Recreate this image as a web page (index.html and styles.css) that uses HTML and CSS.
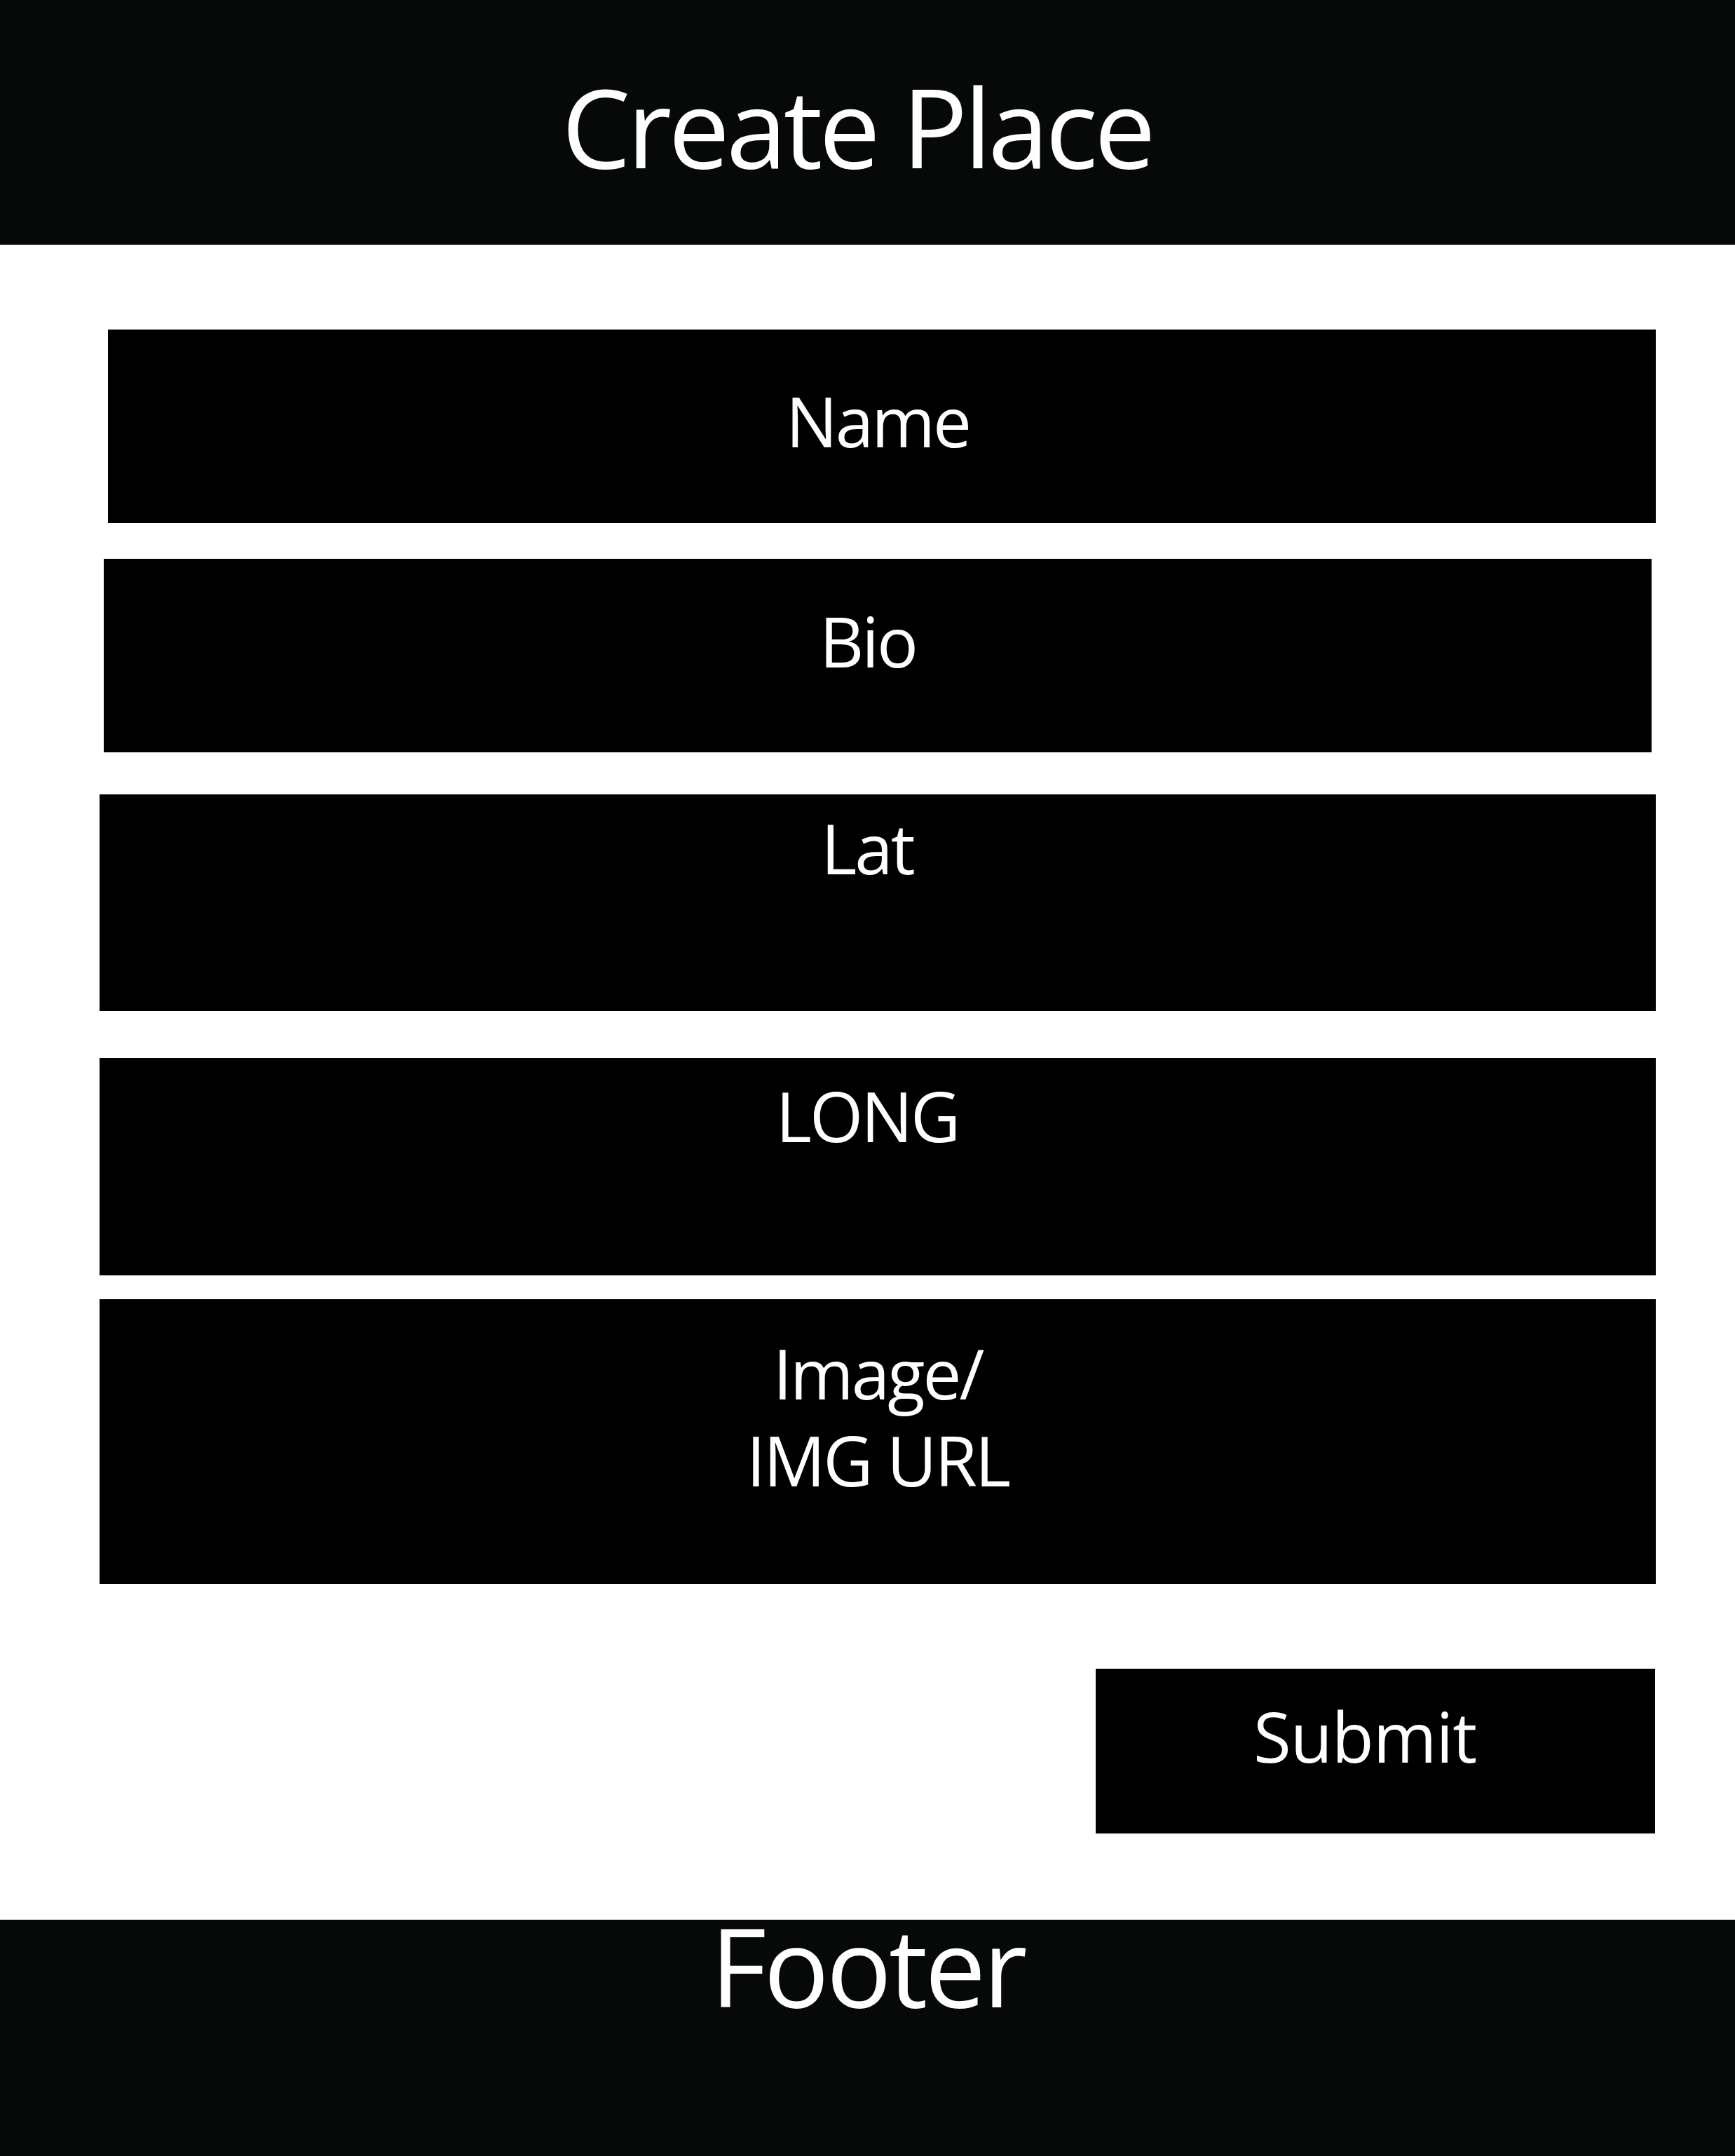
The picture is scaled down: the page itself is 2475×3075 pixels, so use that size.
FILE: index.html
```html
<!DOCTYPE html>
<html lang="en">
<head>
<meta charset="utf-8">
<title>Create Place</title>
<link rel="stylesheet" href="styles.css">
</head>
<body>
  <header class="site-header">
    <h1 class="site-title">Create Place</h1>
  </header>
  <main class="place-form">
    <div class="field field--name"><span class="field-label">Name</span></div>
    <div class="field field--bio"><span class="field-label">Bio</span></div>
    <div class="field field--lat"><span class="field-label">Lat</span></div>
    <div class="field field--long"><span class="field-label">LONG</span></div>
    <div class="field field--image"><span class="field-label">Image/<br>IMG URL</span></div>
    <button class="submit-btn" type="button">Submit</button>
  </main>
  <footer class="site-footer">
    <span class="footer-text">Footer</span>
  </footer>
</body>
</html>
```
FILE: styles.css
```css
* {
  box-sizing: border-box;
}

html, body {
  margin: 0;
  padding: 0;
  background: #ffffff;
}

body {
  width: 2475px;
  height: 3075px;
  font-family: "Open Sans", "Noto Sans", "Liberation Sans", sans-serif;
  color: #ffffff;
  display: flex;
  flex-direction: column;
}

.site-header {
  height: 349px;
  background: #070908;
  padding-top: 102px;
  text-align: center;
}

.site-title {
  margin: 0;
  padding-right: 30px;
  font-size: 156px;
  font-weight: 400;
  line-height: 1;
  letter-spacing: -5px;
}

.place-form {
  display: flex;
  flex-direction: column;
  padding-top: 121px;
}

.field {
  background: #000000;
  text-align: center;
  font-size: 98px;
  line-height: 1;
  letter-spacing: -3px;
}

.field--name {
  height: 276px;
  margin: 0 113px 0 154px;
  padding-top: 81px;
  padding-right: 12px;
}

.field--bio {
  height: 276px;
  margin: 51px 119px 0 148px;
  padding-top: 68px;
  padding-right: 28px;
}

.field--lat {
  height: 309px;
  margin: 60px 113px 0 142px;
  padding-top: 27px;
  padding-right: 30px;
}

.field--long {
  height: 310px;
  margin: 67px 113px 0 142px;
  padding-top: 33px;
  padding-right: 30px;
}

.field--image {
  height: 406px;
  margin: 34px 113px 0 142px;
  padding-top: 43px;
  line-height: 124px;
}

.submit-btn {
  display: flex;
  justify-content: center;
  align-items: flex-start;
  align-self: flex-end;
  width: 798px;
  height: 235px;
  margin: 121px 114px 0 0;
  padding: 47px 30px 0 0;
  border: 0;
  background: #000000;
  color: #ffffff;
  font-family: "Open Sans", "Noto Sans", "Liberation Sans", sans-serif;
  font-size: 98px;
  line-height: 1;
  letter-spacing: -1px;
}

.site-footer {
  margin-top: 123px;
  flex: 1;
  background: #070908;
  padding-top: 3px;
  text-align: center;
}

.footer-text {
  display: inline-block;
  font-size: 155px;
  line-height: 0.8;
  letter-spacing: -4px;
}
```
